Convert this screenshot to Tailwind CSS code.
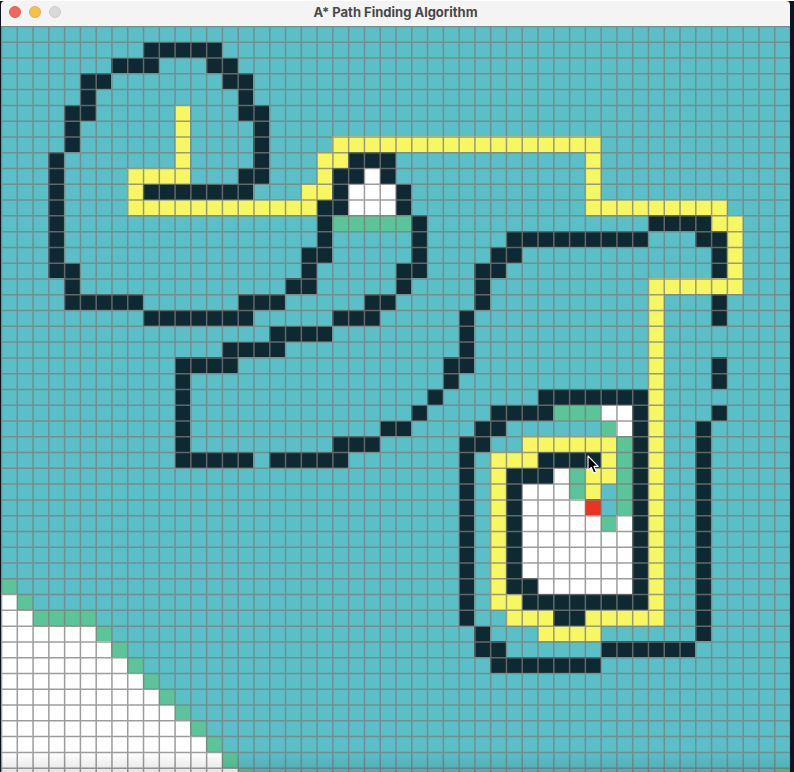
<!DOCTYPE html>
<html lang="en">
<head>
<meta charset="utf-8">
<meta name="viewport" content="width=device-width, initial-scale=1">
<title>A* Path Finding Algorithm</title>
<script src="https://cdn.jsdelivr.net/npm/@tailwindcss/browser@4"></script>
</head>
<body class="h-screen overflow-hidden bg-[#0c1420] font-['Inter','Liberation_Sans',sans-serif]">
<main class="flex h-full flex-col border-t border-white pr-1 pl-px">
  <header class="grid h-[25px] shrink-0 grid-cols-[1fr_auto_1fr] items-center rounded-t-[4px] bg-[#f4f4f4]">
    <div class="flex gap-2 pb-1 pl-2">
      <button type="button" aria-label="Close" class="size-3 rounded-full border border-[#df5f56] bg-[#ec695e]"></button>
      <button type="button" aria-label="Minimize" class="size-3 rounded-full border border-[#e5b049] bg-[#f4bf50]"></button>
      <button type="button" aria-label="Zoom" disabled class="size-3 rounded-full border border-[#cccccc] bg-[#d9d9d9]"></button>
    </div>
    <h1 class="pb-1 text-[13px] leading-4 font-bold text-[#484848]">A* Path Finding Algorithm</h1>
  </header>
  <div class="relative min-h-0 flex-1 overflow-hidden">
    <svg id="board" viewBox="0 0 789 789" class="block w-full" role="img" aria-label="Search grid">
      <rect width="789" height="789" fill="#5bbfc8"/>
      <g id="cells" shape-rendering="crispEdges"></g>
      <path id="lines" fill="none" stroke="#7c7c7c" stroke-opacity="0.75" stroke-width="1.5"/>
      <path d="M587 430v14.2l3.2-2.9 2.5 5.7 2.6-1.1-2.4-5.5h4.3z" fill="#000" stroke="#fff" stroke-width="1.1" stroke-linejoin="round"/>
    </svg>
    <div class="pointer-events-none absolute inset-x-0 bottom-0 h-5 bg-linear-to-t from-black/10 to-transparent"></div>
  </div>
</main>
<script>
// Runs of cells per colour: [row, first column, last column, optional last row]
const SIZE = 15.78;
const runs = {
  '#ffffff': [
    [9,23,23],[10,22,24,11],[24,38,39],[25,39,39],[28,35,35],[29,33,35],[30,33,36],[31,33,37],[31,39,39],[32,33,39,34],[35,34,39],
    [36,0,0],[37,0,1],[38,0,5],[39,0,6],[40,0,7],[41,0,8],[42,0,9],[43,0,10],[44,0,11],[45,0,12],[46,0,13],[47,0,14]
  ],
  '#5bc498': [
    [12,21,25],[24,35,37],[25,38,38],[26,39,39,30],[28,36,36,29],[31,38,38],
    [35,0,0],[36,1,1],[37,2,5],[38,6,6],[39,7,7],[40,8,8],[41,9,9],[42,10,10],[43,11,11],[44,12,12],[45,13,13],[46,14,14],[47,15,15],[47,49,49]
  ],
  '#f7f663': [
    [5,11,11,8],[9,8,11],[10,8,8],[11,8,19],[10,19,20],[8,20,20,9],[8,21,21],[7,21,37],[8,37,37,10],[11,37,45],[12,45,46],[13,46,46,15],
    [16,41,46],[17,41,41,36],[37,37,41],[38,34,37],[37,32,34],[36,31,32],[28,31,31,35],[27,31,33],[26,33,38],[27,38,38],[28,37,38],[29,37,37]
  ],
  '#ea3323': [[30,37,37]],
  '#0e2932': [
    [1,9,13],[2,7,9],[2,13,14],[3,5,6],[3,14,15],[4,5,5],[4,15,15],[5,4,5],[5,15,16],[6,4,4,7],[6,16,16,8],[8,3,3,14],[9,15,16],[10,9,15],
    [15,3,4],[16,4,4],[17,4,8],[18,9,15],[17,15,17],[16,18,19],[15,19,19],[14,19,20],[12,20,20,13],[11,20,21],[10,21,21],[9,21,22],[8,22,24],
    [9,24,24],[10,25,25,11],[12,26,26,14],[15,25,26],[16,25,25],[17,23,24],[18,21,23],[19,17,20],[20,14,17],[21,11,14],[22,11,11,26],[27,11,15],
    [27,17,21],[26,21,23],[25,24,25],[24,26,26],[23,27,27],[22,28,28],[21,28,29],[18,29,29,20],[16,30,30,17],[15,30,31],[14,31,32],[13,32,40],
    [12,41,44],[13,44,45],[14,45,45,15],[17,45,45,18],[21,45,45,22],[24,45,45],[25,44,44,38],[39,38,43],[40,31,37],[39,30,31],[38,30,30],
    [26,29,29,37],[26,30,30],[25,30,31],[24,31,34],[23,34,40],[24,40,40,35],[36,33,40],[37,35,36],[35,32,33],[29,32,32,34],[28,32,34],[27,34,37]
  ]
};
const NS = 'http://www.w3.org/2000/svg';
const cells = document.getElementById('cells');
for (const [fill, list] of Object.entries(runs)) {
  for (const [row, first, last, bottom = row] of list) {
    const r = document.createElementNS(NS, 'rect');
    r.setAttribute('x', first * SIZE);
    r.setAttribute('y', row * SIZE);
    r.setAttribute('width', (last - first + 1) * SIZE);
    r.setAttribute('height', (bottom - row + 1) * SIZE);
    r.setAttribute('fill', fill);
    cells.append(r);
  }
}
let d = '';
for (let i = 0; i <= 50; i++) {
  const p = (i * SIZE + 0.5).toFixed(2);
  d += `M${p} 0V789M0 ${p}H789`;
}
document.getElementById('lines').setAttribute('d', d);
</script>
</body>
</html>
